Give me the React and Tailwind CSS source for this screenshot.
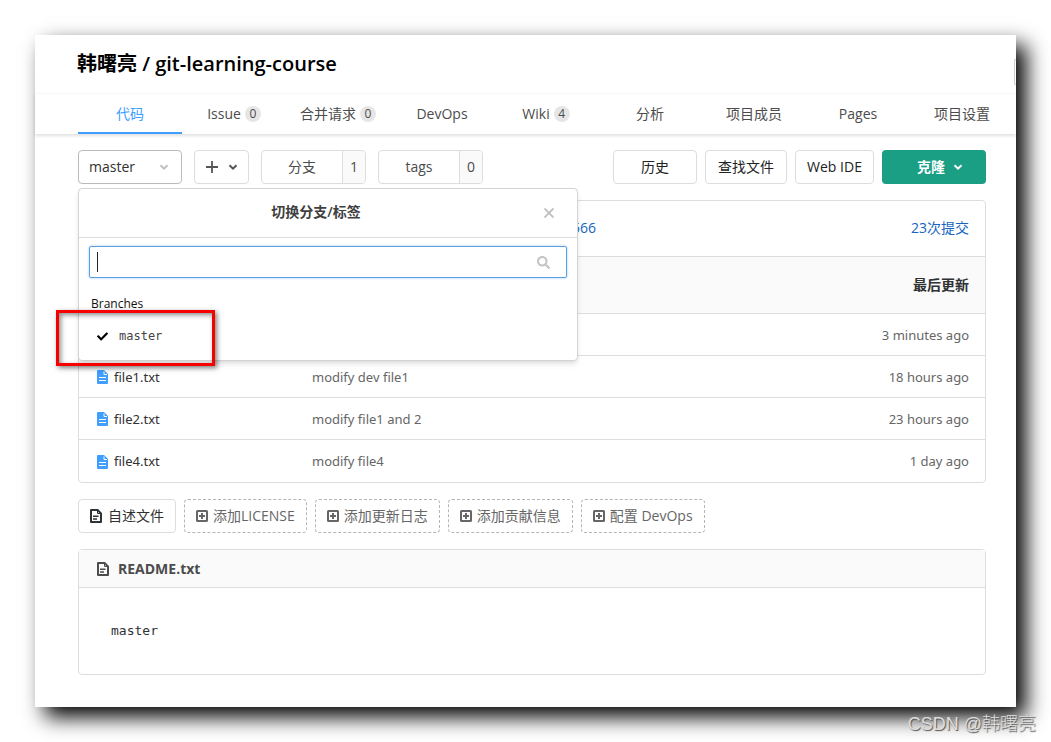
import React, { useState } from "react";
import { FaCheck, FaSearch } from "react-icons/fa";

const tabs = [
  { name: "代码", active: true },
  { name: "Issue", count: 0 },
  { name: "合并请求", count: 0 },
  { name: "DevOps" },
  { name: "Wiki", count: 4 },
  { name: "分析" },
  { name: "项目成员" },
  { name: "Pages" },
  { name: "项目设置" },
];

const files = [
  { name: "file1.txt", message: "modify dev file1", updated: "18 hours ago" },
  { name: "file2.txt", message: "modify file1 and 2", updated: "23 hours ago" },
  { name: "file4.txt", message: "modify file4", updated: "1 day ago" },
];

const extras = ["添加LICENSE", "添加更新日志", "添加贡献信息", "配置 DevOps"];

function Chevron({ className }) {
  return (
    <svg viewBox="0 0 10 10" className={className} fill="none" stroke="currentColor" strokeWidth="2">
      <path d="M1.5 3.2 5 6.7l3.5-3.5" />
    </svg>
  );
}

function DocIcon({ className }) {
  return (
    <svg viewBox="0 0 12 14" className={className} fill="none" stroke="currentColor">
      <path d="M1 1h6.6L11 4.4V13H1z" strokeWidth="2" strokeLinejoin="round" />
      <path d="M7.5 1v3.5H11" strokeWidth="1" />
      <path d="M3 7.2h5.5M3 10h4" strokeWidth="1.5" />
    </svg>
  );
}

function FileIcon() {
  return (
    <svg viewBox="0 0 11 14" className="h-[14px] w-[11px] shrink-0">
      <path d="M1 0h6l4 4v9a1 1 0 0 1-1 1H1a1 1 0 0 1-1-1V1a1 1 0 0 1 1-1z" fill="#409eff" />
      <path d="M7 1.5V4.5h3" fill="none" stroke="#fff" strokeWidth="1" />
      <path d="M2 7.5h7M2 10.5h7" stroke="#fff" strokeWidth="1" />
    </svg>
  );
}

function PlusBox() {
  return (
    <svg viewBox="0 0 12 12" className="h-3 w-3 shrink-0" fill="none" stroke="currentColor">
      <rect x="1" y="1" width="10" height="10" rx="0.5" strokeWidth="2" />
      <path d="M6 3v6M3 6h6" strokeWidth="2" />
    </svg>
  );
}

function BranchPanel() {
  const [query, setQuery] = useState("");

  return (
    <div className="absolute left-0 top-[38px] z-10 h-[173px] w-[500px] rounded border border-[#d4d4d5] bg-white shadow-md">
      <div className="flex h-[49px] items-center border-b border-[#dcddde] pl-3 pr-5">
        <h2 className="flex-1 pb-0.5 text-center font-semibold text-[#404040]">切换分支/标签</h2>
        <button aria-label="关闭" className="flex h-4 w-4 items-center justify-center text-[#bfbfbf]">
          <svg viewBox="0 0 10 10" className="h-[10px] w-[10px]" stroke="currentColor" strokeWidth="1.9">
            <path d="M.5.5l9 9M9.5.5l-9 9" />
          </svg>
        </button>
      </div>
      <div className="mx-[10px] mt-2 flex h-8 items-center rounded-xs border border-[#5a9fe6] pr-4 shadow-[0_0_3px_#a8d0f5]">
        <span className="ml-[7px] h-5 w-px bg-[#222]"></span>
        <input
          type="text"
          aria-label="搜索分支"
          value={query}
          onChange={(e) => setQuery(e.target.value)}
          className="h-full min-w-0 flex-1 px-1 text-sm outline-none"
        />
        <FaSearch className="h-[13px] w-[13px] text-[#c4c4c4]" />
      </div>
      <h3 className="mt-4 px-3 text-xs leading-5 font-medium text-[#111]">Branches</h3>
      <ul>
        <li>
          <button className="flex h-11 w-full items-center gap-[11px] pl-[18px] text-left font-['DejaVu_Sans_Mono',monospace] text-xs text-[#444]">
            <FaCheck className="h-[11px] w-[11px] text-black" />
            master
          </button>
        </li>
      </ul>
      {/* highlight around the current branch */}
      <div className="pointer-events-none absolute -left-[23px] top-[121px] h-14 w-[159px] border-3 border-[#f60000] shadow-[2px_2px_5px_rgba(0,0,0,0.5),inset_2px_2px_5px_rgba(0,0,0,0.45)]"></div>
    </div>
  );
}

function CountButton({ label, count }) {
  return (
    <button className="flex h-[34px] w-[105px] overflow-hidden rounded border border-[#dcddde] text-sm leading-8 text-[#4c4c4c]">
      <span className="flex-1">{label}</span>
      <span className="w-[23px] border-l border-[#dcddde] bg-[#fafafa]">{count}</span>
    </button>
  );
}

function App() {
  return (
    <div className="relative bg-white p-[35px] font-['Open_Sans','Noto_Sans_CJK_SC',sans-serif] text-sm text-[#40485b]">
      <div className="bg-white pb-8 shadow-[10px_10px_20px_#000]">
        <header className="flex h-[58px] items-center justify-between pl-[42px]">
          <h1 className="text-xl font-semibold text-black">
            <a href="#owner">韩曙亮</a> / <a href="#repo">git-learning-course</a>
          </h1>
          <div className="mt-4 h-[26px] w-0.5 rounded-l-xs border-y border-l border-[#ccc]"></div>
        </header>

        <nav className="flex h-[41px] border-t border-[#f8f8f8] pl-[43px] pr-0.5 shadow-[0_2px_3px_rgba(0,0,0,0.12)]">
          {tabs.map((tab) => (
            <a
              key={tab.name}
              href="#tab"
              className={
                tab.active
                  ? "flex flex-1 items-center justify-center border-b-2 border-[#409eff] pt-0.5 text-[#409eff]"
                  : "flex flex-1 items-center justify-center gap-1 border-b-2 border-transparent pt-0.5 text-[#4c4c4c]"
              }
            >
              {tab.name}
              {tab.count !== undefined && (
                <span className="h-4 w-4 rounded-full bg-[#e6e6e6] text-center text-xs leading-4">{tab.count}</span>
              )}
            </a>
          ))}
        </nav>

        <main className="flex flex-col gap-4 pl-[43px] pr-[30px] pt-4">
          <div className="flex justify-between">
            <div className="flex gap-3">
              <div className="relative">
                <button
                  aria-expanded="true"
                  className="flex h-[34px] w-[104px] items-center justify-between rounded border border-[#bbb] pl-[10px] pr-3 text-[#303133]"
                >
                  master
                  <Chevron className="h-[10px] w-[10px] text-[#c0c0c0]" />
                </button>
                <BranchPanel />
              </div>
              <button
                aria-label="新建"
                className="flex h-[34px] w-[55px] items-center justify-center gap-[10px] rounded border border-[#dcddde] text-[#555]"
              >
                <svg viewBox="0 0 12 12" className="h-3 w-3" stroke="currentColor" strokeWidth="1.8">
                  <path d="M6 0v12M0 6h12" />
                </svg>
                <Chevron className="h-[10px] w-[10px]" />
              </button>
              <CountButton label="分支" count={1} />
              <CountButton label="tags" count={0} />
            </div>
            <div className="flex gap-2 text-[#222]">
              <button className="h-[34px] w-[84px] rounded border border-[#dcddde]">历史</button>
              <button className="h-[34px] w-[82px] rounded border border-[#dcddde]">查找文件</button>
              <button className="h-[34px] w-[79px] rounded border border-[#dcddde]">Web IDE</button>
              <button className="flex h-[34px] w-[104px] items-center justify-center gap-2 rounded bg-[#1a9f85] pl-3 font-semibold text-white">
                克隆
                <Chevron className="h-[10px] w-[10px]" />
              </button>
            </div>
          </div>

          <section className="rounded border border-[#dcddde]">
            <div className="flex h-14 items-center justify-between border-b border-[#dcddde] pb-px pl-[493px] pr-4 text-[#1565c0]">
              <a href="#commit">566</a>
              <a href="#commits">23次提交</a>
            </div>
            <table className="w-full table-fixed">
              <thead>
                <tr className="h-14 border-b border-[#dcddde] bg-[#fafafa]">
                  <th className="w-[233px]"></th>
                  <th></th>
                  <th className="pr-4 text-right font-semibold text-[#303133]">最后更新</th>
                </tr>
              </thead>
              <tbody className="font-['Noto_Sans',sans-serif] text-[13px] text-[#666]">
                <tr className="h-[42px] border-b border-[#dcddde]">
                  <td></td>
                  <td></td>
                  <td className="pr-4 pt-0.5 text-right">3 minutes ago</td>
                </tr>
                {files.map((file) => (
                  <tr key={file.name} className="h-[42px] border-b border-[#dcddde] last:h-[43px] last:border-b-0">
                    <td className="pl-[18px] pt-0.5">
                      <a href="#file" className="flex items-center gap-1.5 text-[#303133]">
                        <FileIcon />
                        {file.name}
                      </a>
                    </td>
                    <td className="pt-0.5">{file.message}</td>
                    <td className="pr-4 pt-0.5 text-right">{file.updated}</td>
                  </tr>
                ))}
              </tbody>
            </table>
          </section>

          <div className="flex gap-2 text-[#666]">
            <button className="flex h-[34px] items-center gap-1.5 rounded border border-[#dcddde] px-[11px] text-[#303133]">
              <DocIcon className="h-[14px] w-3 shrink-0" />
              自述文件
            </button>
            {extras.map((name) => (
              <button
                key={name}
                className="flex h-[34px] items-center gap-[5px] rounded border border-dashed border-[#b5b5b5] px-[11px]"
              >
                <PlusBox />
                {name}
              </button>
            ))}
          </div>

          <section className="rounded border border-[#dcddde]">
            <h2 className="flex h-[38px] items-center gap-[9px] border-b border-[#dcddde] bg-[#fafafa] pl-[18px] font-bold text-[#4c4c4c]">
              <DocIcon className="h-[14px] w-3" />
              README.txt
            </h2>
            <pre className="px-8 py-8 font-['DejaVu_Sans_Mono',monospace] text-[13px] leading-[22px] text-[#303133]">master</pre>
          </section>
        </main>
      </div>

      <p className="absolute bottom-1.5 right-[15px] font-['Liberation_Sans','Noto_Sans_CJK_SC',sans-serif] text-lg leading-6 font-light text-[#ddd] [text-shadow:1px_1px_1px_#555]">
        CSDN @韩曙亮
      </p>
    </div>
  );
}

export default App;
